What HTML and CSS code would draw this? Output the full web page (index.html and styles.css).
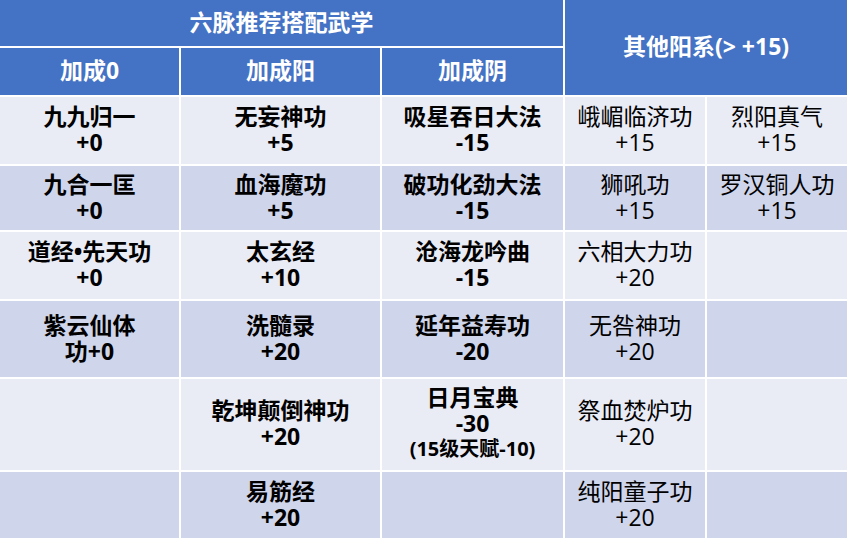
FILE: index.html
```html
<!DOCTYPE html>
<html lang="zh-CN">
<head>
<meta charset="utf-8">
<title>六脉推荐搭配武学</title>
<link rel="stylesheet" href="styles.css">
</head>
<body>
<div class="table">
  <div class="cell head title"><div class="txt">六脉推荐搭配武学</div></div>
  <div class="cell head other"><div class="txt">其他阳系(&gt; +15)</div></div>
  <div class="cell head"><div class="txt">加成0</div></div>
  <div class="cell head"><div class="txt">加成阳</div></div>
  <div class="cell head"><div class="txt">加成阴</div></div>

  <div class="cell odd b"><div class="txt">九九归一<br>+0</div></div>
  <div class="cell odd b"><div class="txt">无妄神功<br>+5</div></div>
  <div class="cell odd b"><div class="txt">吸星吞日大法<br>-15</div></div>
  <div class="cell odd"><div class="txt">峨嵋临济功<br>+15</div></div>
  <div class="cell odd"><div class="txt">烈阳真气<br>+15</div></div>

  <div class="cell even b"><div class="txt">九合一匡<br>+0</div></div>
  <div class="cell even b"><div class="txt">血海魔功<br>+5</div></div>
  <div class="cell even b"><div class="txt">破功化劲大法<br>-15</div></div>
  <div class="cell even"><div class="txt">狮吼功<br>+15</div></div>
  <div class="cell even"><div class="txt">罗汉铜人功<br>+15</div></div>

  <div class="cell odd b"><div class="txt">道经<span class="dot">•</span>先天功<br>+0</div></div>
  <div class="cell odd b"><div class="txt">太玄经<br>+10</div></div>
  <div class="cell odd b"><div class="txt">沧海龙吟曲<br>-15</div></div>
  <div class="cell odd"><div class="txt">六相大力功<br>+20</div></div>
  <div class="cell odd"></div>

  <div class="cell even b"><div class="txt">紫云仙体<br>功+0</div></div>
  <div class="cell even b"><div class="txt">洗髓录<br>+20</div></div>
  <div class="cell even b"><div class="txt">延年益寿功<br>-20</div></div>
  <div class="cell even"><div class="txt">无咎神功<br>+20</div></div>
  <div class="cell even"></div>

  <div class="cell odd"></div>
  <div class="cell odd b"><div class="txt">乾坤颠倒神功<br>+20</div></div>
  <div class="cell odd b"><div class="txt">日月宝典<br>-30<div class="note">(15级天赋-10)</div></div></div>
  <div class="cell odd"><div class="txt">祭血焚炉功<br>+20</div></div>
  <div class="cell odd"></div>

  <div class="cell even"></div>
  <div class="cell even b"><div class="txt">易筋经<br>+20</div></div>
  <div class="cell even"></div>
  <div class="cell even"><div class="txt">纯阳童子功<br>+20</div></div>
  <div class="cell even"></div>
</div>
</body>
</html>
```
FILE: styles.css
```css
html, body {
  margin: 0;
  background: #ffffff;
}
.table {
  display: grid;
  width: 847px;
  grid-template-columns: 179px 199px 181px 140px 140px;
  grid-template-rows: 46px 47px 67px 64px 67px 76px 91px 66px;
  gap: 2px;
  font-family: "Open Sans", "Noto Sans CJK SC", sans-serif;
  font-size: 23px;
  line-height: 26px;
  color: #000000;
}
.cell {
  display: flex;
  align-items: center;
  justify-content: center;
  text-align: center;
  padding-bottom: 3px;
  box-sizing: border-box;
}
.b { font-weight: 700; }
.head {
  background: #4472c4;
  color: #ffffff;
  font-weight: 700;
}
.title { grid-column: 1 / 4; }
.other { grid-column: 4 / 6; grid-row: 1 / 3; }
.odd { background: #e9ebf5; }
.even { background: #cfd5ea; }
.dot {
  font-family: "Open Sans", sans-serif;
}
.note {
  font-size: 20px;
  line-height: 26px;
}
```
